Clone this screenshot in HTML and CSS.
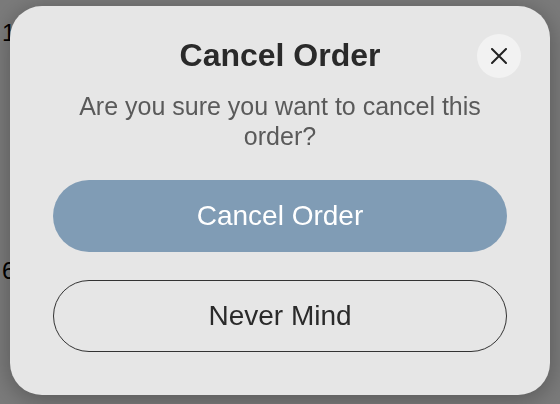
FILE: index.html
```html
<!DOCTYPE html>
<html lang="en">
<head>
    <meta charset="UTF-8">
    <meta name="viewport" content="width=device-width, initial-scale=1.0">
    <title>Cancel Order</title>
    <link rel="stylesheet" href="styles.css">
</head>
<body>
    <!-- страница под модальным окном -->
    <div class="page">
        <div class="order-row row-first">1 order</div>
        <div class="order-row row-second">6 items</div>
    </div>

    <!-- модальное окно -->
    <div class="overlay">
        <div class="modal">
            <button class="close-button" aria-label="Close">
                <svg width="16" height="16" viewBox="0 0 16 16">
                    <path d="M1 1 L15 15 M15 1 L1 15" stroke="#222" stroke-width="2" stroke-linecap="round"/>
                </svg>
            </button>
            <h2 class="modal-title">Cancel Order</h2>
            <p class="modal-text">Are you sure you want to cancel this order?</p>
            <button class="pill-button primary">Cancel Order</button>
            <button class="pill-button secondary">Never Mind</button>
        </div>
    </div>
</body>
</html>
```

FILE: styles.css
```css
/* стиль страницы */
body {
    margin: 0;
    font-family: "Liberation Sans", Arial, sans-serif;
    background-color: #fff;
}

.page {
    padding: 0 2px;
}

.order-row {
    font-family: "Liberation Sans", Arial, sans-serif;
    font-size: 24px;
    line-height: 28px;
    color: #000;
}

.row-first {
    padding-top: 19px;
}

.row-second {
    padding-top: 210px;
}

.overlay {
    position: fixed;
    top: 0;
    left: 0;
    right: 0;
    bottom: 0;
    background-color: rgba(0, 0, 0, 0.52);
    display: flex;
    justify-content: center;
    align-items: flex-start;
    padding-top: 6px;
}

.modal {
    position: relative;
    width: 540px;
    box-sizing: border-box;
    padding: 30px 43px 43px;
    background-color: #e6e6e6;
    border-radius: 32px;
    box-shadow: 0 4px 24px rgba(0, 0, 0, 0.3);
    display: flex;
    flex-direction: column;
}

.close-button {
    position: absolute;
    top: 28px;
    right: 29px;
    width: 44px;
    height: 44px;
    border: none;
    border-radius: 50%;
    background-color: #f2f2f2;
    display: flex;
    align-items: center;
    justify-content: center;
    padding: 0;
    cursor: pointer;
}

.modal-title {
    margin: 0;
    font-size: 32px;
    line-height: 38px;
    font-weight: bold;
    color: #2a2a2a;
    text-align: center;
}

.modal-text {
    margin: 17px 0 29px;
    font-size: 25px;
    line-height: 30px;
    color: #5a5a5a;
    text-align: center;
}

.pill-button {
    height: 72px;
    border-radius: 36px;
    font-family: inherit;
    font-size: 28px;
    cursor: pointer;
}

.primary {
    background-color: #809cb5;
    color: #fff;
    border: none;
    margin-bottom: 28px;
}

.secondary {
    background-color: transparent;
    color: #2a2a2a;
    border: 1px solid #333;
}
```
